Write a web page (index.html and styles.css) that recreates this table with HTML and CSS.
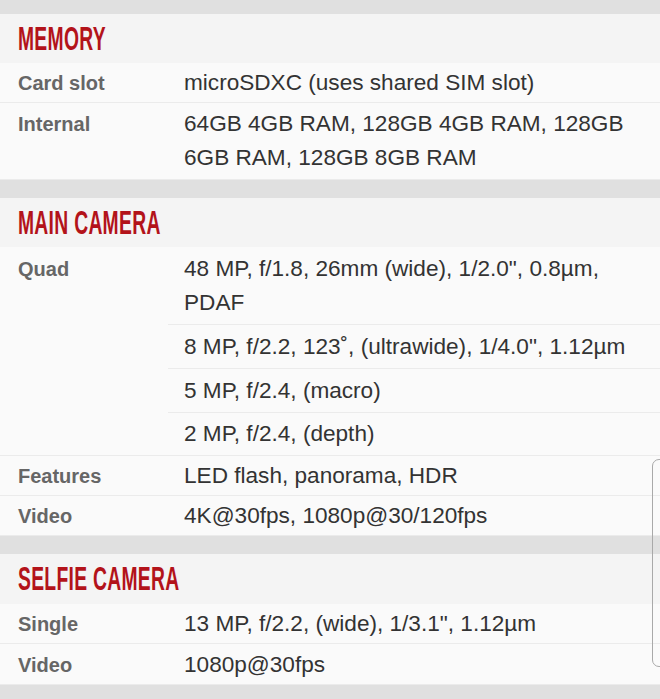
FILE: index.html
```html
<!DOCTYPE html>
<html>
<head>
<meta charset="utf-8">
<link rel="stylesheet" href="styles.css">
</head>
<body>
<div class="page">
  <div class="band band-top"></div>
  <section class="group">
    <div class="head"><h2 class="title">MEMORY</h2></div>
    <div class="row">
      <div class="label">Card slot</div>
      <div class="vals"><div class="val">microSDXC (uses shared SIM slot)</div></div>
    </div>
    <div class="row">
      <div class="label label-wrap">Internal</div>
      <div class="vals"><div class="val val-wrap">64GB 4GB RAM, 128GB 4GB RAM, 128GB 6GB RAM, 128GB 8GB RAM</div></div>
    </div>
  </section>
  <div class="band"></div>
  <section class="group">
    <div class="head"><h2 class="title">MAIN CAMERA</h2></div>
    <div class="row">
      <div class="label label-tall">Quad</div>
      <div class="vals">
        <div class="val val-tall">48 MP, f/1.8, 26mm (wide), 1/2.0", 0.8µm, PDAF</div>
        <div class="val val-tall">8 MP, f/2.2, 123˚, (ultrawide), 1/4.0", 1.12µm</div>
        <div class="val val-tall">5 MP, f/2.4, (macro)</div>
        <div class="val val-mid">2 MP, f/2.4, (depth)</div>
      </div>
    </div>
    <div class="row">
      <div class="label">Features</div>
      <div class="vals"><div class="val">LED flash, panorama, HDR</div></div>
    </div>
    <div class="row">
      <div class="label">Video</div>
      <div class="vals"><div class="val">4K@30fps, 1080p@30/120fps</div></div>
    </div>
  </section>
  <div class="band"></div>
  <section class="group">
    <div class="head head-selfie"><h2 class="title">SELFIE CAMERA</h2></div>
    <div class="row">
      <div class="label">Single</div>
      <div class="vals"><div class="val">13 MP, f/2.2, (wide), 1/3.1", 1.12µm</div></div>
    </div>
    <div class="row">
      <div class="label label-wrap">Video</div>
      <div class="vals"><div class="val val-last">1080p@30fps</div></div>
    </div>
  </section>
  <div class="band"></div>
  <div class="scroll-handle"></div>
</div>
</body>
</html>
```

FILE: styles.css
```css
html, body {
  margin: 0;
  padding: 0;
}
body {
  background: #e0e0e0;
  font-family: "Liberation Sans", Arial, sans-serif;
  width: 660px;
  height: 699px;
  overflow: hidden;
}
.page {
  position: relative;
  display: flex;
  flex-direction: column;
}
.band {
  height: 18px;
  flex: 0 0 18px;
  background: #e0e0e0;
}
.band-top {
  height: 14px;
  flex-basis: 14px;
}
.group {
  background: #fafafa;
}
.head {
  height: 49px;
  background: #f4f4f4;
  display: flex;
  align-items: center;
  padding-left: 18px;
}
.head-selfie {
  height: 50px;
}
.title {
  margin: 0;
  font-family: "Liberation Sans", Arial, sans-serif;
  font-weight: bold;
  font-size: 33px;
  line-height: 34px;
  color: #b3131a;
  transform: scaleX(0.585);
  transform-origin: left center;
  white-space: nowrap;
  letter-spacing: 0.5px;
}
.row {
  display: flex;
  border-bottom: 1px solid #ebebeb;
}
.label {
  width: 150px;
  flex: 0 0 150px;
  padding: 3px 0 2px 18px;
  font-size: 20px;
  font-weight: bold;
  line-height: 34px;
  color: #666666;
}
.label-wrap {
  padding-top: 4px;
}
.label-tall {
  padding-top: 5px;
}
.vals {
  flex: 1;
  display: flex;
  flex-direction: column;
}
.val {
  padding: 3px 14px 2px 16px;
  font-size: 22.6px;
  line-height: 34px;
  color: #333333;
}
.val-wrap {
  padding-top: 4px;
  padding-bottom: 4px;
}
.val-tall {
  padding-top: 5px;
  padding-bottom: 4px;
  border-bottom: 1px solid #ebebeb;
}
.val-mid {
  padding-top: 4px;
  padding-bottom: 4px;
}
.val-last {
  padding-top: 4px;
  padding-bottom: 2px;
}
.scroll-handle {
  position: absolute;
  left: 652px;
  top: 459px;
  width: 20px;
  height: 208px;
  border: 1.5px solid #a9a9a9;
  border-radius: 7px;
  box-sizing: border-box;
}
```
